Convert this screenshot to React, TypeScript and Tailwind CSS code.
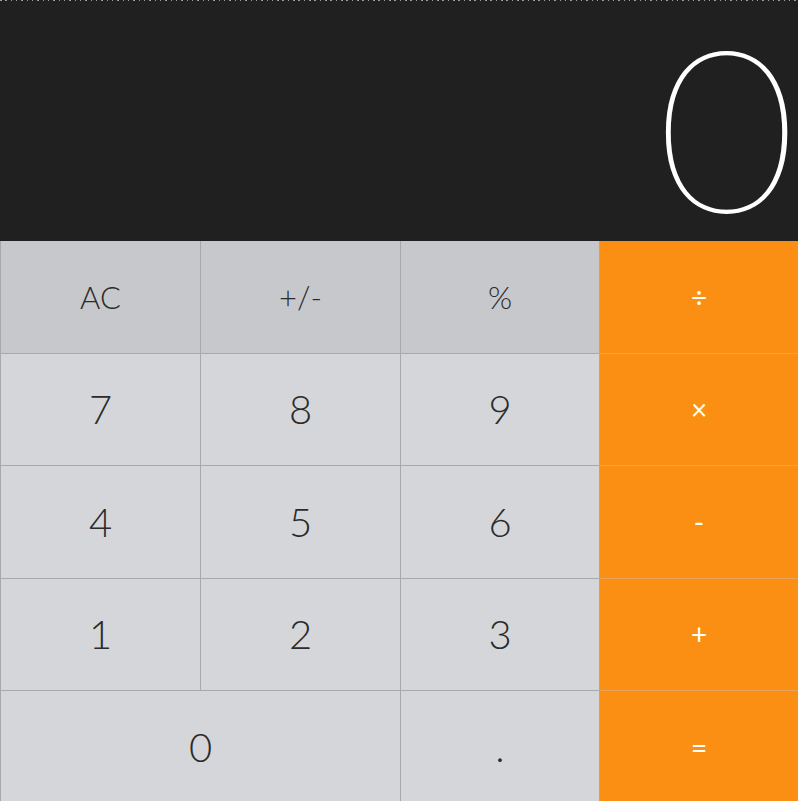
import React, { useState } from 'react';

type Key = {
  label: string;
  kind: 'fn' | 'num' | 'op';
  wide?: boolean;
};

const keys: Key[] = [
  { label: 'AC', kind: 'fn' },
  { label: '+/-', kind: 'fn' },
  { label: '%', kind: 'fn' },
  { label: '÷', kind: 'op' },
  { label: '7', kind: 'num' },
  { label: '8', kind: 'num' },
  { label: '9', kind: 'num' },
  { label: '×', kind: 'op' },
  { label: '4', kind: 'num' },
  { label: '5', kind: 'num' },
  { label: '6', kind: 'num' },
  { label: '-', kind: 'op' },
  { label: '1', kind: 'num' },
  { label: '2', kind: 'num' },
  { label: '3', kind: 'num' },
  { label: '+', kind: 'op' },
  { label: '0', kind: 'num', wide: true },
  { label: '.', kind: 'num' },
  { label: '=', kind: 'op' },
];

const App: React.FC = () => {
  const [display, setDisplay] = useState('0');

  const press = (k: Key) => {
    if (k.kind === 'num') {
      setDisplay((d) => (d === '0' && k.label !== '.' ? k.label : d + k.label));
    } else if (k.label === 'AC') {
      setDisplay('0');
    }
  };

  return (
    <div className="w-[798px] h-[801px] overflow-hidden bg-[#202020] font-['Lato',sans-serif]">
      {/* dotted strip along the very top */}
      <div className="h-px bg-[repeating-linear-gradient(90deg,#9c9c9c_0_1.5px,transparent_1.5px_5.33px)]" />
      <div className="h-[240px] flex items-end justify-end pr-[2px]">
        <span className="inline-block origin-right scale-x-[1.07] text-white font-thin text-[225px] leading-[240px] -mb-[4px] [-webkit-text-stroke:1.8px_white]">
          {display}
        </span>
      </div>
      <div className="grid grid-cols-[200px_200px_199px_199px] grid-rows-[repeat(5,112.5px)]">
        {keys.map((k) => {
          const base = 'flex items-center justify-center border-l border-b border-[#a9a9ab]';
          const col =
            k.kind === 'fn'
              ? 'bg-[#c7c8cb] text-[#2b2b2b] text-[31px] font-light'
              : k.kind === 'num'
              ? 'bg-[#d5d6d9] text-[#2b2b2b] text-[40px] font-light'
              : 'bg-[#fa8f14] text-white text-[28px] font-normal border-b-[#e9a35c]';
          return (
            <button
              key={k.label}
              onClick={() => press(k)}
              className={`${base} ${col} ${k.wide ? 'col-span-2' : ''}`}
            >
              {k.label}
            </button>
          );
        })}
      </div>
    </div>
  );
};

export default App;
